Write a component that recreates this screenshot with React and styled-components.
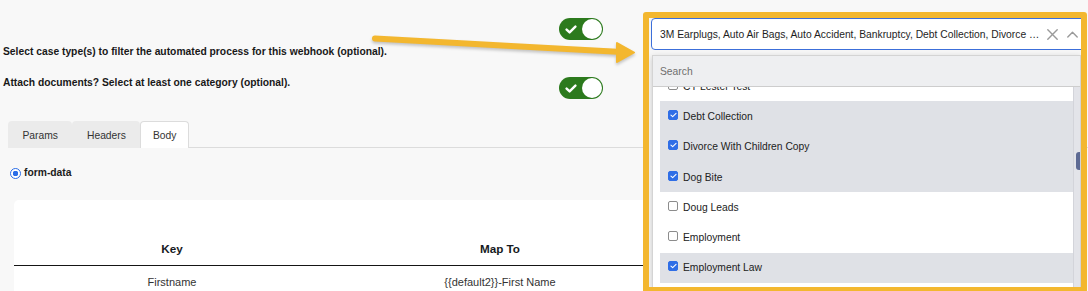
import React from "react";
import styled, { createGlobalStyle } from "styled-components";

const GlobalStyle = createGlobalStyle`
  html, body {
    margin: 0;
    padding: 0;
  }
  body {
    background: #f8f8f8;
    font-family: "Liberation Sans", Arial, sans-serif;
    color: #1c1c1c;
  }
`;

const Page = styled.div`
  position: relative;
  width: 1088px;
  height: 291px;
  overflow: hidden;
  background: #f8f8f8;
`;

const Main = styled.div`
  display: flex;
  flex-direction: column;
  padding: 18px 0 0 3px;
`;

const Settings = styled.div`
  display: flex;
  flex-direction: column;
  gap: 19px;
  width: 600px;
`;

const SettingRow = styled.div`
  display: flex;
  justify-content: space-between;
  align-items: flex-start;
`;

const SettingLabel = styled.span`
  margin-top: ${(p) => p.$offset}px;
  font-size: 10.3px;
  font-weight: 700;
  line-height: 12px;
  color: #181818;
`;

const Toggle = styled.span`
  display: inline-flex;
  align-items: center;
  justify-content: space-between;
  box-sizing: border-box;
  width: 44px;
  height: 22px;
  padding: 0 1px 0 6px;
  border-radius: 11px;
  background: #2c7a1d;
`;

const Knob = styled.span`
  width: 20px;
  height: 20px;
  border-radius: 50%;
  background: #fff;
`;

const TabBar = styled.div`
  display: flex;
  align-items: flex-end;
  margin: 22px 0 0 5px;
  border-bottom: 1px solid #dcdcdc;
`;

const Tab = styled.div`
  display: flex;
  align-items: center;
  box-sizing: border-box;
  height: 27px;
  margin-bottom: -1px;
  padding: 0 ${(p) => (p.$active ? 11.5 : 13.5)}px;
  border: 1px solid ${(p) => (p.$active ? "#dcdcdc" : "transparent")};
  border-bottom: none;
  border-radius: 4px 4px 0 0;
  background: ${(p) => (p.$active ? "#fff" : "#ebebeb")};
  font-size: 10.3px;
  color: #333;
`;

const RadioRow = styled.label`
  display: flex;
  align-items: center;
  gap: 3px;
  margin: 19px 0 0 7px;
  font-size: 10.3px;
  font-weight: 700;
  line-height: 12px;
`;

const Radio = styled.span`
  box-sizing: border-box;
  width: 11px;
  height: 11px;
  border-radius: 50%;
  border: 1.5px solid #2a6de8;
  background: radial-gradient(circle, #2a6de8 0 2.6px, #fff 3px);
`;

const Card = styled.div`
  margin: 21px 14px 0 11px;
  padding-top: 34px;
  height: 120px;
  border-radius: 5px 5px 0 0;
  background: #fff;
`;

const TableRow = styled.div`
  display: grid;
  grid-template-columns: 316px 340px 1fr;
  align-items: center;
  box-sizing: border-box;
  height: ${(p) => (p.$head ? 32 : 33)}px;
  padding-bottom: ${(p) => (p.$head ? 3 : 1)}px;
  border-bottom: ${(p) => (p.$head ? "1.5px solid #151515" : "none")};
`;

const Cell = styled.div`
  text-align: center;
  font-size: ${(p) => (p.$head ? 11.7 : 11)}px;
  font-weight: ${(p) => (p.$head ? 700 : 400)};
  color: ${(p) => (p.$head ? "#161a22" : "#333")};
`;

const Highlight = styled.div`
  position: absolute;
  left: 643px;
  top: 12px;
  box-sizing: border-box;
  width: 444px;
  height: 281px;
  display: flex;
  flex-direction: column;
  border: 6px solid #f3b72f;
  border-radius: 3px;
  overflow: hidden;
  background: #f6f6f6;
`;

const SelectBox = styled.div`
  display: flex;
  align-items: center;
  flex-shrink: 0;
  box-sizing: border-box;
  width: 434px;
  height: 32px;
  margin-left: 2px;
  padding: 0 6.5px 0 8px;
  border: 1.5px solid #3c6fda;
  border-radius: 4px;
  background: #fff;
`;

const SelectValue = styled.span`
  flex: 1;
  min-width: 0;
  overflow: hidden;
  white-space: nowrap;
  text-overflow: ellipsis;
  font-size: 10.3px;
  color: #1e1e1e;
`;

const SelectIcons = styled.span`
  display: flex;
  align-items: center;
  gap: 9px;
  margin-left: 4px;
`;

const Panel = styled.div`
  flex: 1;
  display: flex;
  flex-direction: column;
  box-sizing: border-box;
  width: 429px;
  margin: 5px 0 0 3px;
  border: 1px solid #d4d4d4;
  border-bottom: none;
  background: #fff;
  box-shadow: 0 2px 6px rgba(0, 0, 0, 0.18);
  overflow: hidden;
`;

const Search = styled.div`
  display: flex;
  align-items: center;
  flex-shrink: 0;
  height: 30px;
  padding-left: 7px;
  border-bottom: 1px solid #cdcdcd;
  background: #eeeff1;
  font-size: 10.3px;
  color: #6e6e6e;
`;

const ListArea = styled.div`
  flex: 1;
  display: flex;
  min-height: 0;
`;

const Viewport = styled.div`
  flex: 1;
  overflow: hidden;
  padding-left: 7px;
`;

const ListInner = styled.div`
  margin-top: -${(p) => p.$scroll}px;
`;

const Option = styled.div`
  display: flex;
  align-items: center;
  gap: 5px;
  height: 30.3px;
  padding-left: 8px;
  background: ${(p) => (p.$selected ? "#dfe1e6" : "transparent")};
  font-size: 10.3px;
  color: #222;
`;

const Check = styled.span`
  display: flex;
  align-items: center;
  justify-content: center;
  box-sizing: border-box;
  width: 10px;
  height: 10px;
  margin-top: -3px;
  border-radius: 2px;
  border: 1px solid ${(p) => (p.$checked ? "#2f6ee6" : "#8c8c8c")};
  background: ${(p) => (p.$checked ? "#2f6ee6" : "#fff")};
`;

const ScrollTrack = styled.div`
  width: 7px;
  padding-top: 65px;
  box-sizing: border-box;
  border-left: 1px solid #d3d4da;
  background: #e3e4e9;
`;

const ScrollThumb = styled.div`
  width: 6px;
  height: 18px;
  margin-left: 2px;
  border-radius: 3px;
  background: #5d6a93;
`;

const ArrowLayer = styled.svg`
  position: absolute;
  left: 0;
  top: 0;
  pointer-events: none;
  filter: drop-shadow(0 2px 1.5px rgba(0, 0, 0, 0.22));
`;

const caseTypes = [
  { name: "CY Lester Test", checked: false },
  { name: "Debt Collection", checked: true },
  { name: "Divorce With Children Copy", checked: true },
  { name: "Dog Bite", checked: true },
  { name: "Doug Leads", checked: false },
  { name: "Employment", checked: false },
  { name: "Employment Law", checked: true },
  { name: "Estate Planning", checked: false },
];

function CheckMark({ color = "#fff", w = 12, h = 9, sw = 2.4 }) {
  return (
    <svg width={w} height={h} viewBox="0 0 12 9">
      <path d="M1.6 4.6 L4.6 7.4 L10.4 1.6" fill="none" stroke={color} strokeWidth={sw} strokeLinecap="round" strokeLinejoin="round" />
    </svg>
  );
}

function Switch() {
  return (
    <Toggle>
      <CheckMark />
      <Knob />
    </Toggle>
  );
}

function ClearIcon() {
  return (
    <svg width="11" height="11" viewBox="0 0 11 11">
      <path d="M0.8 0.8 L10.2 10.2 M10.2 0.8 L0.8 10.2" stroke="#9a9a9a" strokeWidth="1.4" strokeLinecap="round" />
    </svg>
  );
}

function ChevronUp() {
  return (
    <svg width="11" height="7" viewBox="0 0 11 7">
      <path d="M0.8 6 L5.5 1.2 L10.2 6" fill="none" stroke="#9a9a9a" strokeWidth="1.4" strokeLinecap="round" strokeLinejoin="round" />
    </svg>
  );
}

export default function App() {
  return (
    <Page>
      <GlobalStyle />
      <Main>
        <Settings>
          <SettingRow>
            <SettingLabel $offset={28}>
              Select case type(s) to filter the automated process for this webhook (optional).
            </SettingLabel>
            <Switch />
          </SettingRow>
          <SettingRow>
            <SettingLabel $offset={0}>
              Attach documents? Select at least one category (optional).
            </SettingLabel>
            <Switch />
          </SettingRow>
        </Settings>

        <TabBar>
          <Tab>Params</Tab>
          <Tab>Headers</Tab>
          <Tab $active>Body</Tab>
        </TabBar>

        <RadioRow>
          <Radio />
          form-data
        </RadioRow>

        <Card>
          <TableRow $head>
            <Cell $head>Key</Cell>
            <Cell $head>Map To</Cell>
            <Cell $head />
          </TableRow>
          <TableRow>
            <Cell>Firstname</Cell>
            <Cell>{"{{default2}}-First Name"}</Cell>
            <Cell />
          </TableRow>
        </Card>
      </Main>

      <ArrowLayer width="1088" height="291">
        <line x1="375" y1="38.5" x2="622" y2="52" stroke="#f3b72f" strokeWidth="6" strokeLinecap="round" />
        <polygon points="617,43 634,52.5 617,62" fill="#f3b72f" stroke="#f3b72f" strokeWidth="2" strokeLinejoin="round" />
      </ArrowLayer>

      <Highlight>
        <SelectBox>
          <SelectValue>
            3M Earplugs, Auto Air Bags, Auto Accident, Bankruptcy, Debt Collection, Divorce With Children Copy, Dog Bite, Employment Law
          </SelectValue>
          <SelectIcons>
            <ClearIcon />
            <ChevronUp />
          </SelectIcons>
        </SelectBox>
        <Panel>
          <Search>Search</Search>
          <ListArea>
            <Viewport>
              <ListInner $scroll={16}>
                {caseTypes.map((c) => (
                  <Option key={c.name} $selected={c.checked}>
                    <Check $checked={c.checked}>
                      {c.checked && <CheckMark w={7} h={6} sw={1.8} />}
                    </Check>
                    {c.name}
                  </Option>
                ))}
              </ListInner>
            </Viewport>
            <ScrollTrack>
              <ScrollThumb />
            </ScrollTrack>
          </ListArea>
        </Panel>
      </Highlight>
    </Page>
  );
}
